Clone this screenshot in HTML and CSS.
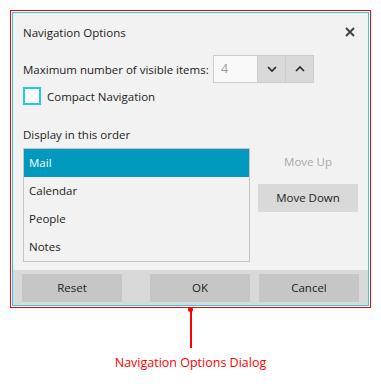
FILE: index.html
```html
<!DOCTYPE html>
<html lang="en">
<head>
    <meta charset="UTF-8">
    <title>Navigation Options</title>
    <link rel="stylesheet" href="styles.css">
</head>
<body>

    <div class="frame">
        <div class="dialog">
            <div class="main">
                <div class="header">
                    <span class="title">Navigation Options</span>
                    <svg class="close" width="10" height="10" viewBox="0 0 10 10">
                        <path d="M1 1 L9 9 M9 1 L1 9" stroke="#444" stroke-width="2"/>
                    </svg>
                </div>

                <div class="option-row">
                    <span class="option-label">Maximum number of visible items:</span>
                    <div class="spinner">
                        <div class="spin-value">4</div>
                        <div class="spin-btn">
                            <svg width="10" height="6" viewBox="0 0 10 6"><path d="M1 1 L5 5 L9 1" fill="none" stroke="#222" stroke-width="1.6"/></svg>
                        </div>
                        <div class="spin-btn">
                            <svg width="10" height="6" viewBox="0 0 10 6"><path d="M1 5 L5 1 L9 5" fill="none" stroke="#222" stroke-width="1.6"/></svg>
                        </div>
                    </div>
                </div>

                <div class="check-row">
                    <div class="checkbox"></div>
                    <span>Compact Navigation</span>
                </div>

                <div class="order-label">Display in this order</div>

                <div class="order-row">
                    <ul class="order-list">
                        <li class="selected">Mail</li>
                        <li>Calendar</li>
                        <li>People</li>
                        <li>Notes</li>
                    </ul>
                    <div class="move-buttons">
                        <div class="btn disabled">Move Up</div>
                        <div class="btn">Move Down</div>
                    </div>
                </div>
            </div>

            <div class="footer">
                <div class="btn dark">Reset</div>
                <div class="btn dark ok">OK</div>
                <div class="btn dark">Cancel</div>
            </div>
        </div>
    </div>

    <div class="callout">
        <div class="dot"></div>
        <div class="line"></div>
        <div class="callout-text">Navigation Options Dialog</div>
    </div>

</body>
</html>
```

FILE: styles.css
```css
* {
    margin: 0;
    padding: 0;
    box-sizing: border-box;
}

body {
    font-family: 'Open Sans', 'Noto Sans', sans-serif;
    font-size: 11.5px;
    color: #222;
    background-color: #fff;
    padding: 10px 0 0 10px;
}

.frame {
    width: 361px;
    height: 298px;
    border: 1px solid #f00;
    padding: 1px;
    background-color: #fff;
}

.dialog {
    height: 100%;
    border: 1px solid #1ed0ee;
    background-color: #f2f2f2;
    display: flex;
    flex-direction: column;
}

.main {
    flex: 1;
    padding: 0 10px;
}

.header {
    height: 38px;
    display: flex;
    align-items: center;
    justify-content: space-between;
    padding-right: 3px;
}

.option-row {
    margin-top: 4px;
    height: 28px;
    display: flex;
    align-items: center;
}

.option-label {
    width: 190px;
    white-space: nowrap;
}

.spinner {
    display: flex;
    height: 28px;
}

.spin-value {
    width: 45px;
    border: 1px solid #ccc;
    background-color: #f9f9f9;
    color: #999;
    padding-left: 7px;
    line-height: 26px;
    font-size: 12.5px;
}

.spin-btn {
    width: 28px;
    background-color: #d9d9d9;
    border: 1px solid #ccc;
    border-left: none;
    display: flex;
    align-items: center;
    justify-content: center;
}

.check-row {
    margin-top: 4px;
    height: 18px;
    display: flex;
    align-items: center;
    gap: 6px;
}

.checkbox {
    width: 18px;
    height: 18px;
    border: 2px solid #1ec8f0;
    background-color: #fff;
}

.order-label {
    margin-top: 22px;
    line-height: 16px;
}

.order-row {
    margin-top: 5px;
    display: flex;
    gap: 8px;
}

.order-list {
    list-style: none;
    width: 227px;
    height: 114px;
    border: 1px solid #c4c4c4;
}

.order-list li {
    height: 28px;
    line-height: 28px;
    padding-left: 5px;
}

.order-list li.selected {
    background-color: #0199bd;
    color: #fff;
}

.move-buttons {
    display: flex;
    flex-direction: column;
    gap: 8px;
}

.btn {
    width: 100px;
    height: 28px;
    line-height: 28px;
    text-align: center;
    background-color: #d9d9d9;
}

.btn.disabled {
    background-color: transparent;
    color: #a9a9a9;
}

.footer {
    height: 35px;
    background-color: #d9d9d9;
    display: flex;
    align-items: center;
    padding: 0 9px;
    gap: 9px;
}

.btn.dark {
    background-color: #c6c6c6;
}

.btn.ok {
    margin-left: 19px;
}

.callout {
    width: 361px;
    display: flex;
    flex-direction: column;
    align-items: center;
}

.dot {
    width: 5px;
    height: 5px;
    border-radius: 50%;
    background-color: #f00;
    margin-top: -1px;
}

.line {
    width: 2px;
    height: 38px;
    background-color: #f00;
    margin-top: -2px;
}

.callout-text {
    color: #f00;
    margin-top: 6px;
    font-size: 12.5px;
}
```
